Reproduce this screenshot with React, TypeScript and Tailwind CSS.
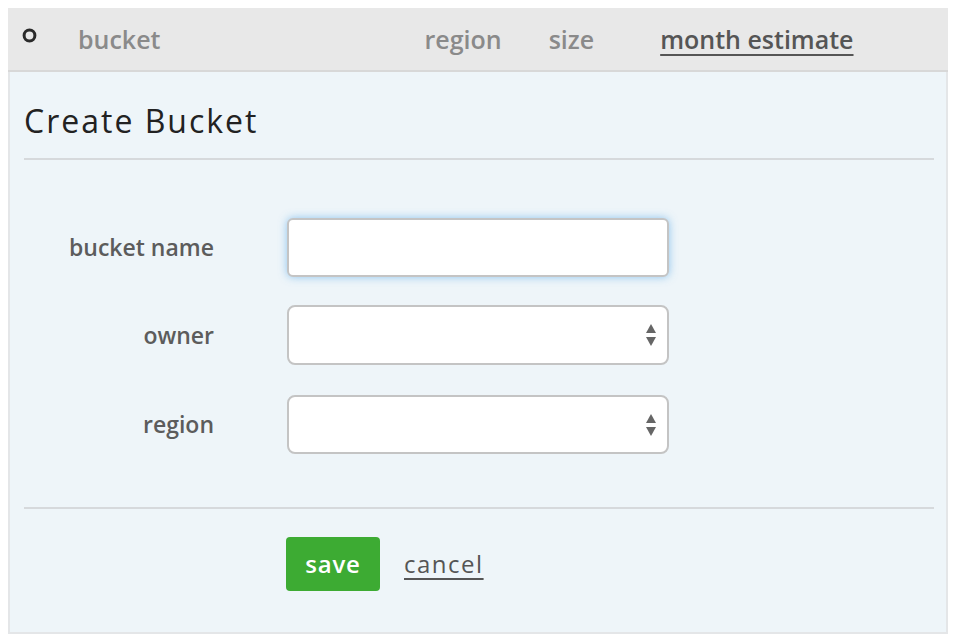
import React from "react";

const Arrows = () => (
  <svg width="12" height="24" viewBox="0 0 12 24" className="absolute right-[10px] top-1/2 -translate-y-1/2">
    <polygon points="6,1 11,10 1,10" fill="#666" />
    <polygon points="1,14 11,14 6,23" fill="#666" />
  </svg>
);

export default function App() {
  return (
    <div className="min-h-[640px] bg-white p-2" style={{ fontFamily: '"Open Sans", sans-serif' }}>
      <div className="h-[64px] bg-[#e8e8e8] border-b-2 border-[#d8d8d8] flex items-center">
        <svg width="15" height="15" viewBox="0 0 15 15" className="ml-[14px] -mt-[8px] shrink-0">
          <circle cx="7.5" cy="7.5" r="5.4" fill="none" stroke="#2a2a2a" strokeWidth="3" />
        </svg>
        <div className="ml-[41px] text-[25px] font-semibold text-[#8a8a8a] leading-none">bucket</div>
        <div className="ml-[264px] text-[25px] font-semibold text-[#8a8a8a] leading-none">region</div>
        <div className="ml-[47px] text-[25px] font-semibold text-[#8a8a8a] leading-none">size</div>
        <div className="ml-[66px] text-[25px] font-semibold text-[#555] leading-none underline underline-offset-[5px] decoration-2">month estimate</div>
      </div>
      <div className="h-[562px] bg-[#eef5f9] border-x-2 border-b-2 border-[#e4e6e8] pl-[14px] pr-3">
        <div className="h-[88px] flex items-center border-b-2 border-[#d6d9dc]">
          <h1 className="text-[32px] font-normal text-[#222] tracking-[2px] leading-none mt-[12px]">Create Bucket</h1>
        </div>
        <div className="pt-[58px]">
          <div className="flex items-center h-[59px]">
            <label className="w-[190px] text-right text-[23px] font-semibold text-[#5c5c5c]">bucket name</label>
            <div className="ml-[73px] w-[382px] h-[59px] bg-white rounded-[6px] border-2 border-[#c4c4c4] shadow-[0_0_9px_rgba(102,175,233,0.7)]" />
          </div>
          <div className="flex items-center h-[60px] mt-[28px]">
            <label className="w-[190px] text-right text-[23px] font-semibold text-[#5c5c5c]">owner</label>
            <div className="relative ml-[73px] w-[382px] h-[60px] bg-white rounded-[8px] border-2 border-[#c4c4c4]">
              <Arrows />
            </div>
          </div>
          <div className="flex items-center h-[59px] mt-[30px]">
            <label className="w-[190px] text-right text-[23px] font-semibold text-[#5c5c5c]">region</label>
            <div className="relative ml-[73px] w-[382px] h-[59px] bg-white rounded-[8px] border-2 border-[#c4c4c4]">
              <Arrows />
            </div>
          </div>
        </div>
        <div className="mt-[53px] border-t-2 border-[#d6d9dc]" />
        <div className="flex items-center mt-[28px] ml-[262px]">
          <button className="w-[94px] h-[54px] bg-[#3dab33] rounded-[4px] text-white text-[24px] font-semibold tracking-[0.8px]">save</button>
          <a className="ml-[24px] text-[24px] text-[#555] tracking-[1.5px] underline underline-offset-[5px] decoration-2">cancel</a>
        </div>
      </div>
    </div>
  );
}
